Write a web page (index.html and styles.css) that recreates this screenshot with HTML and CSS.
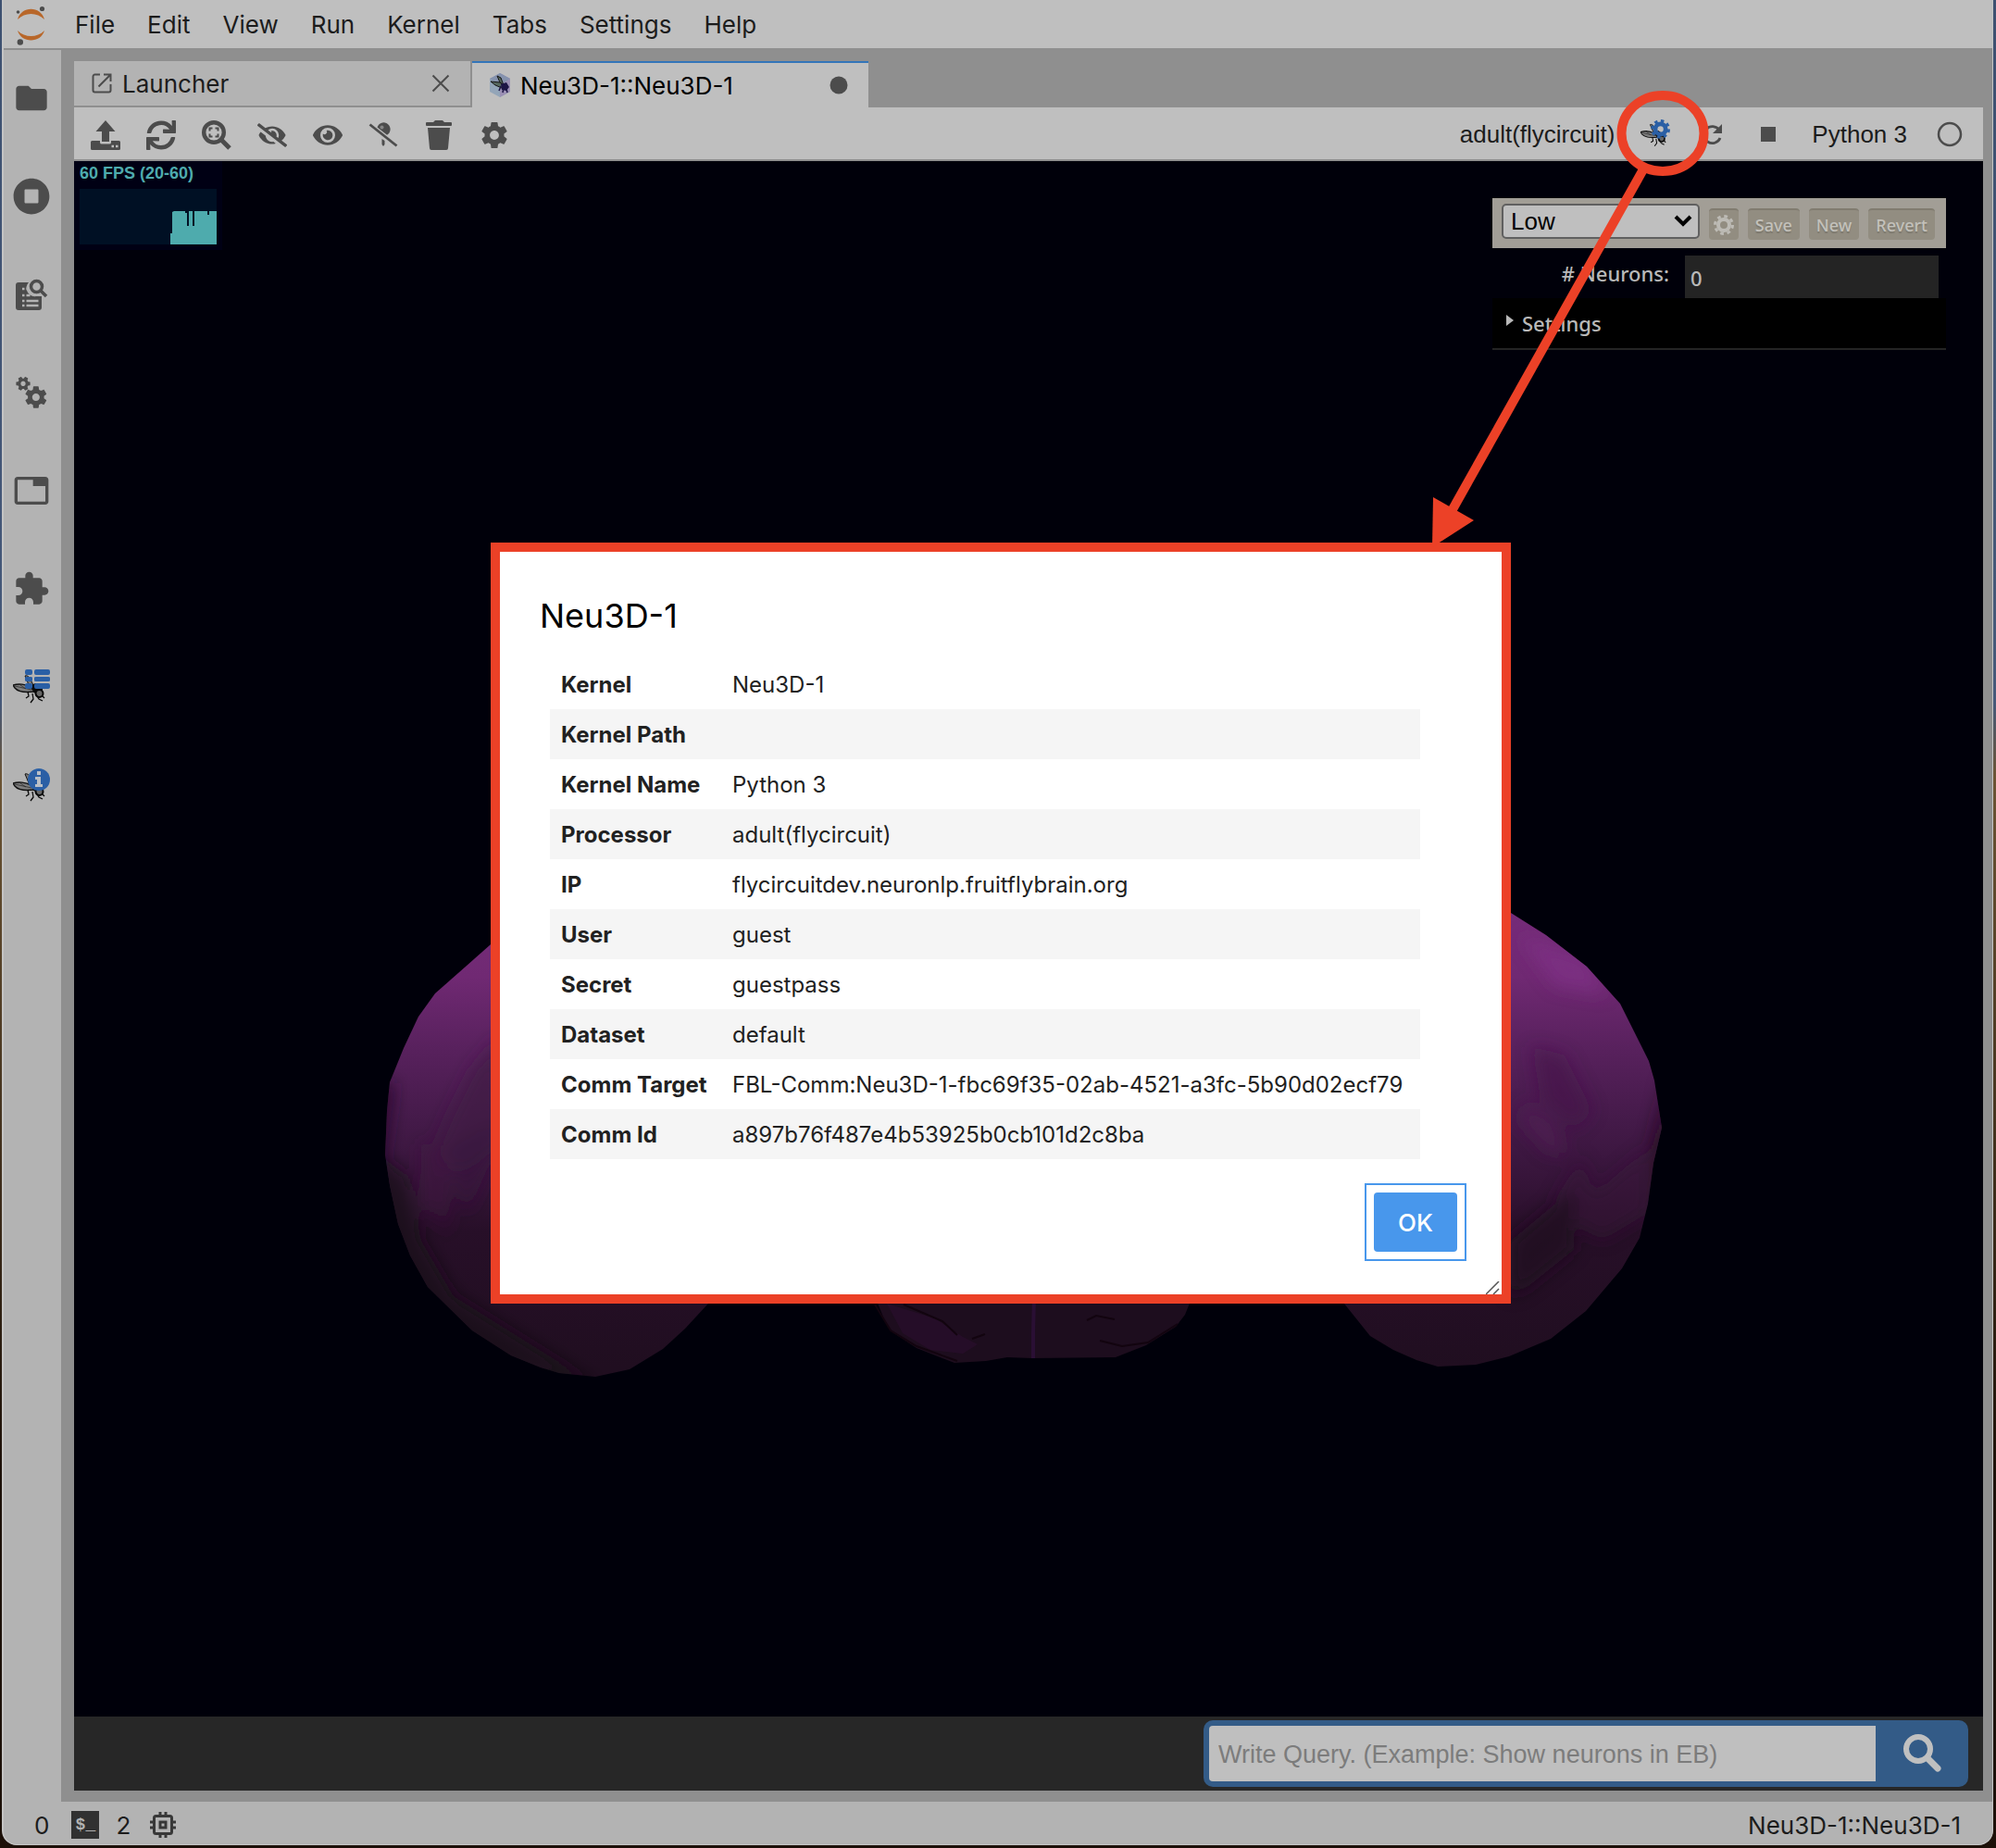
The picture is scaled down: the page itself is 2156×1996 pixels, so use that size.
FILE: index.html
```html
<!DOCTYPE html>
<html lang="en">
<head>
<meta charset="utf-8">
<meta name="viewport" content="width=device-width, initial-scale=1">
<title>Neu3D-1::Neu3D-1 - JupyterLab</title>
<link rel="stylesheet" href="styles.css">
</head>
<body>
<svg class="defs" aria-hidden="true">
  <defs>
    <path id="gear" d="M14.9 17.45C16.25 17.45 17.35 16.35 17.35 15C17.35 13.65 16.25 12.55 14.9 12.55C13.54 12.55 12.45 13.65 12.45 15C12.45 16.35 13.54 17.45 14.9 17.45ZM20.1 15.68L21.58 16.84C21.71 16.95 21.75 17.13 21.66 17.29L20.26 19.71C20.17 19.86 20 19.92 19.83 19.86L18.09 19.16C17.73 19.44 17.33 19.67 16.91 19.85L16.64 21.7C16.62 21.87 16.47 22 16.3 22H13.5C13.32 22 13.18 21.87 13.15 21.7L12.89 19.85C12.46 19.67 12.07 19.44 11.71 19.16L9.96 19.86C9.81 19.92 9.62 19.86 9.54 19.71L8.14 17.29C8.05 17.13 8.09 16.95 8.22 16.84L9.7 15.68L9.65 15L9.7 14.31L8.22 13.16C8.09 13.05 8.05 12.86 8.14 12.71L9.54 10.29C9.62 10.13 9.81 10.07 9.96 10.13L11.71 10.84C12.07 10.56 12.46 10.32 12.89 10.15L13.15 8.29C13.18 8.13 13.32 8 13.5 8H16.3C16.47 8 16.62 8.13 16.64 8.29L16.91 10.15C17.33 10.32 17.73 10.56 18.09 10.84L19.83 10.13C20 10.07 20.17 10.13 20.26 10.29L21.66 12.71C21.75 12.86 21.71 13.05 21.58 13.16L20.1 14.31L20.15 15L20.1 15.68Z"/>
    <g id="fly">
      <path d="M13 7c2-1 5 1 6 4l5 10-6-2z" fill="#777" stroke="#111" stroke-width="1"/>
      <path d="M14 20l10-5 8 6 0 5-6 1-7-4z" fill="#0a0a0a"/>
      <path d="M0 17c6-2 14-1 19 2l4 5c-9 1-17 1-21-4z" fill="#7d7d7d" stroke="#111" stroke-width="1.4"/>
      <path d="M2 18l18 4M8 17l6 4" stroke="#222" stroke-width=".7" fill="none"/>
      <circle cx="28.500" cy="26" r="4" fill="#666" stroke="#0a0a0a" stroke-width="2"/>
      <path d="M16 24l1 5-3 2M21 26l1 6-3 4M25 27l3 5 4 2M32 29l2 2" stroke="#0a0a0a" stroke-width="1.3" fill="none"/>
    </g>
  </defs>
</svg>

<div class="window">
  <header class="menubar">
    <svg class="logo" width="34" height="46" viewBox="0 0 34 46" role="img" aria-label="Jupyter">
      <path d="M3 18C7 3 28 3 32 18C24 10 11 10 3 18Z" fill="#b8672a"/>
      <path d="M3 30C7 44 28 44 32 30C24 38 11 38 3 30Z" fill="#b8672a"/>
      <circle cx="3.500" cy="10" r="1.800" fill="#4c4c4c"/><circle cx="29.500" cy="6.500" r="2.600" fill="#4c4c4c"/><circle cx="5.800" cy="42.500" r="3.200" fill="#4c4c4c"/>
    </svg>
    <nav class="menus" aria-label="Main menu">
      <button>File</button><button>Edit</button><button>View</button><button>Run</button><button>Kernel</button><button>Tabs</button><button>Settings</button><button>Help</button>
    </nav>
  </header>

  <div class="main">
    <aside class="sidebar" aria-label="Panels">
      <button aria-label="File browser"><svg viewBox="0 0 24 24"><path d="M10 4H4c-1.100 0-1.990.9-1.990 2L2 18c0 1.100.9 2 2 2h16c1.100 0 2-.9 2-2V8c0-1.100-.9-2-2-2h-8l-2-2z"/></svg></button>
      <button aria-label="Running sessions"><svg viewBox="0 0 512 512"><path d="M256 8C119 8 8 119 8 256s111 248 248 248 248-111 248-248S393 8 256 8zm96 328c0 8.800-7.200 16-16 16H176c-8.800 0-16-7.200-16-16V176c0-8.800 7.200-16 16-16h160c8.800 0 16 7.200 16 16v160z"/></svg></button>
      <button aria-label="Inspector"><svg viewBox="0 0 40 40">
        <path d="M6 7h11a9 9 0 0 0 8 15h6v12a3 3 0 0 1-3 3H6a3 3 0 0 1-3-3V10a3 3 0 0 1 3-3z"/>
        <path d="M10 14h2.500M14.500 14h2M10 21h2.500M10 27h2.500M14.500 27h13M10 32h2.500M14.500 32h13M14.500 21h4" stroke="#b3b3b3" stroke-width="2.500"/>
        <circle cx="25.500" cy="11.500" r="6" fill="none" stroke="#4c4c4c" stroke-width="3.500"/><path d="M30 16l6 6" stroke="#4c4c4c" stroke-width="3.500"/>
      </svg></button>
      <button aria-label="Property settings"><svg viewBox="0 0 24 24"><use href="#gear"/><use href="#gear" transform="translate(6.600 6.200) rotate(30) scale(.65) translate(-14.900 -15)"/></svg></button>
      <button aria-label="Open tabs"><svg viewBox="0 0 24 24"><path d="M21 3H3c-1.100 0-2 .9-2 2v14c0 1.100.9 2 2 2h18c1.100 0 2-.9 2-2V5c0-1.100-.9-2-2-2zm0 16H3V5h10v4h8v10z"/></svg></button>
      <button aria-label="Extensions"><svg viewBox="0 0 24 24"><path d="M20.500 11H19V7c0-1.100-.9-2-2-2h-4V3.500C13 2.120 11.880 1 10.500 1S8 2.120 8 3.500V5H4c-1.100 0-1.990.9-1.990 2v3.800H3.500c1.490 0 2.700 1.210 2.700 2.700s-1.210 2.700-2.700 2.700H2V20c0 1.100.9 2 2 2h3.800v-1.500c0-1.490 1.210-2.700 2.700-2.700 1.490 0 2.700 1.210 2.700 2.700V22H17c1.100 0 2-.9 2-2v-4h1.500c1.380 0 2.500-1.120 2.500-2.500S21.880 11 20.500 11z"/></svg></button>
      <button aria-label="Fly Brain Lab sessions"><svg viewBox="0 0 40 40"><use href="#fly" y="1"/><path fill="#2a5fa5" d="M15 1h4q2 0 2 2v2q0 2-2 2h-4q-2 0-2-2V3q0-2 2-2zM25 1h13q2 0 2 2v2q0 2-2 2H25q-2 0-2-2V3q0-2 2-2zM15 9h4q2 0 2 1v3q0 1-2 1h-4q-2 0-2-1v-3q0-1 2-1zM25 9h13q2 0 2 1v3q0 1-2 1H25q-2 0-2-1v-3q0-1 2-1zM15 16h4q2 0 2 2v2q0 2-2 2h-4q-2 0-2-2v-2q0-2 2-2zM25 16h13q2 0 2 2v2q0 2-2 2H25q-2 0-2-2v-2q0-2 2-2z"/></svg></button>
      <button aria-label="Fly Brain Lab info"><svg viewBox="0 0 40 40"><use href="#fly" y="1"/><circle cx="28" cy="14" r="12" fill="#2a5fa5"/><path d="M26 5h4v4h-4zM24 11h6v8h2v3h-8v-3h2v-5h-2z" fill="#b9bfc6"/></svg></button>
    </aside>

    <main class="dock">
      <div class="tabs" role="tablist">
        <div class="tab" role="tab">
          <svg width="24" height="24" viewBox="0 0 24 24" fill="none" stroke="#4c4c4c" stroke-width="2"><path d="M10 2.500H4.500a2 2 0 0 0-2 2v15a2 2 0 0 0 2 2h15a2 2 0 0 0 2-2V13M14 2.500h7.500V10M21 3L8.500 15.500"/></svg>
          <span class="tab-name">Launcher</span>
          <button class="tab-close" aria-label="Close"><svg width="20" height="20" viewBox="0 0 20 20"><path d="M1.500 1.500l17 17M18.500 1.500l-17 17" stroke="#4c4c4c" stroke-width="2"/></svg></button>
        </div>
        <div class="tab active" role="tab" aria-selected="true">
          <svg width="24" height="26" viewBox="0 0 24 26"><path d="M12 0l11 6v14l-11 6L1 20V6z" fill="#93a5b8"/><path d="M12 0l11 6v14l-11 6V12z" fill="#9b90b4"/><path d="M12 0l11 6-11 7L1 6z" fill="#8592ad"/><path d="M2 9l10 1 6 5-4 1-7-3zM9 3l4 2 3 8-4-3z" fill="#56685f" stroke="#161616" stroke-width="1"/><path d="M13 12l6-2 3 5-3 4-5-1z" fill="#1d1646"/><path d="M13 14l-2 5M16 16l-1 5M19 17l1 4" stroke="#1d1646" stroke-width="1.500"/></svg>
          <span class="tab-name">Neu3D-1::Neu3D-1</span>
          <button class="tab-close" aria-label="Unsaved changes"><svg width="20" height="20" viewBox="0 0 20 20"><circle cx="10" cy="10" r="9.500" fill="#4c4c4c"/></svg></button>
        </div>
      </div>

      <div class="toolbar">
        <div class="tools">
          <button aria-label="Upload"><svg viewBox="0 0 32 32"><path d="M16 0l10.500 12H20v11h-8V12H5.500z"/><path d="M1.500 22H10v2q0 1.500 2 1.500h8q2 0 2-1.500v-2h8.500Q32 22 32 23.500v7q0 1.500-1.500 1.500h-29Q0 32 0 30.500v-7Q0 22 1.500 22z"/><path d="M22.500 28h2.500M27 28h2.500" stroke="#bfbfbf" stroke-width="2.500"/></svg></button>
          <button aria-label="Reset"><svg viewBox="0 0 512 512"><path d="M440.650 12.570l4 82.770A247.160 247.160 0 0 0 255.830 8C134.730 8 33.910 94.920 12.290 209.820A12 12 0 0 0 24.090 224h49.050a12 12 0 0 0 11.670-9.260 175.910 175.910 0 0 1 317-56.940l-101.460-4.860a12 12 0 0 0-12.570 12v47.410a12 12 0 0 0 12 12H500a12 12 0 0 0 12-12V12a12 12 0 0 0-12-12h-47.370a12 12 0 0 0-11.980 12.570zM255.830 432a175.610 175.610 0 0 1-146-77.800l101.800 4.870a12 12 0 0 0 12.570-12v-47.400a12 12 0 0 0-12-12H12a12 12 0 0 0-12 12V500a12 12 0 0 0 12 12h47.350a12 12 0 0 0 12-12.600l-4.150-82.570A247.170 247.170 0 0 0 255.830 504c121.110 0 221.930-86.920 243.550-201.820a12 12 0 0 0-11.800-14.180h-49.050a12 12 0 0 0-11.670 9.260A175.860 175.860 0 0 1 255.830 432z"/></svg></button>
          <button aria-label="Zoom to fit"><svg viewBox="0 0 32 32"><circle cx="13" cy="13" r="10.800" fill="none" stroke="#4c4c4c" stroke-width="4.400"/><path d="M21 21l9 9" stroke="#4c4c4c" stroke-width="5"/><path d="M8.500 11.500v-3h3M14.500 8.500h3v3M17.500 14.500v3h-3M11.500 17.500h-3v-3" fill="none" stroke="#4c4c4c" stroke-width="2"/></svg></button>
          <button aria-label="Hide all"><svg viewBox="0 0 640 512"><path d="M320 400c-75.850 0-137.250-58.710-142.900-133.110L72.200 185.820c-13.790 17.300-26.480 35.590-36.720 55.590a32.350 32.350 0 0 0 0 29.190C89.710 376.410 197.070 448 320 448c26.910 0 52.870-4 77.890-10.460L346 397.390a144.130 144.130 0 0 1-26 2.610zm313.820 58.100l-110.550-85.440a331.250 331.250 0 0 0 81.250-102.070 32.350 32.350 0 0 0 0-29.190C550.290 135.590 442.930 64 320 64a308.150 308.150 0 0 0-147.320 37.700L45.460 3.370A16 16 0 0 0 23 6.180L3.370 31.450A16 16 0 0 0 6.180 53.900l588.360 454.730a16 16 0 0 0 22.460-2.810l19.640-25.270a16 16 0 0 0-2.820-22.450zm-183.720-142l-39.300-30.380A94.750 94.750 0 0 0 416 256a94.760 94.760 0 0 0-121.310-92.210A47.650 47.650 0 0 1 304 192a46.640 46.640 0 0 1-1.540 10l-73.610-56.890A142.310 142.310 0 0 1 320 112a143.920 143.920 0 0 1 144 144c0 21.630-5.290 41.790-13.900 60.110z"/></svg></button>
          <button aria-label="Show all"><svg viewBox="0 0 576 512"><path d="M572.520 241.400C518.290 135.590 410.930 64 288 64S57.680 135.640 3.480 241.410a32.350 32.350 0 0 0 0 29.190C57.710 376.410 165.070 448 288 448s230.320-71.640 284.520-177.410a32.350 32.350 0 0 0 0-29.190zM288 400a144 144 0 1 1 144-144 143.930 143.930 0 0 1-144 144zm0-240a95.310 95.310 0 0 0-25.310 3.790 47.850 47.850 0 0 1-66.900 66.900A95.780 95.780 0 1 0 288 160z"/></svg></button>
          <button aria-label="Unpin all"><svg viewBox="0 0 32 32"><path d="M1.500 4.500l29 23" stroke="#4c4c4c" stroke-width="2.800"/><path d="M9.500 7.500a7.200 7.200 0 1 1 10.500 8.300z"/><circle cx="14.500" cy="7.500" r="2" fill="#858585"/><path d="M14.500 20l3 2v4l-1.500 2-1.500-2z"/></svg></button>
          <button aria-label="Remove all"><svg viewBox="0 0 32 32"><path d="M3 2h7l2-2h8l2 2h7q1 0 1 1v2q0 1-1 1H3Q2 6 2 5V3q0-1 1-1zM4 8h24l-2 22q0 2-2 2H8q-2 0-2-2z"/></svg></button>
          <button aria-label="Settings"><svg viewBox="6.900 7 16 16"><use href="#gear"/></svg></button>
        </div>
        <div class="kernel">
          <button class="processor">adult(flycircuit)</button>
          <button class="fly-config" aria-label="Processor settings"><svg width="32" height="32" viewBox="0 0 40 40"><use href="#fly"/><circle cx="27" cy="13" r="7" fill="none" stroke="#2a5fa5" stroke-width="6"/><circle cx="27" cy="13" r="11" fill="none" stroke="#2a5fa5" stroke-width="4" stroke-dasharray="4.320 4.320"/></svg></button>
          <button class="restart" aria-label="Restart kernel"><svg width="24" height="24" viewBox="0 0 24 24"><path d="M19 7.500A9 9 0 1 0 20 16" fill="none" stroke="#4c4c4c" stroke-width="2.800"/><path d="M22 1v10H12z"/></svg></button>
          <button class="stop" aria-label="Interrupt kernel"><svg width="16" height="16" viewBox="0 0 16 16"><path d="M0 0h16v16H0z"/></svg></button>
          <button class="kernel-name">Python 3</button>
          <svg width="28" height="28" viewBox="0 0 28 28"><circle cx="14" cy="14" r="12" fill="none" stroke="#4c4c4c" stroke-width="2.500"/></svg>
        </div>
      </div>

      <section class="canvas" aria-label="3D view">
        <svg class="brain" viewBox="80 174 2062 1680" preserveAspectRatio="xMidYMid meet" aria-hidden="true">
          <defs>
            <linearGradient id="lobe" gradientUnits="userSpaceOnUse" x1="0" y1="986" x2="0" y2="1476">
              <stop offset="0" stop-color="#752c79"/><stop offset=".14" stop-color="#702973"/><stop offset=".3" stop-color="#58215d"/><stop offset=".46" stop-color="#441a49"/><stop offset=".6" stop-color="#351438"/><stop offset=".7" stop-color="#270f28"/><stop offset="1" stop-color="#200e20"/>
            </linearGradient>
            <filter id="soft" x="-20%" y="-20%" width="140%" height="140%"><feGaussianBlur stdDeviation="9"/></filter>
            <clipPath id="left"><path d="M545 1010L530 1020L470 1073L452 1098L436 1132L421 1169L418 1200L416 1247L421 1280L430 1322L443 1356L462 1390L510 1437L552 1464L584 1477L604 1483L643 1487L680 1479L716 1457L740 1435L765 1408V1010Z"/></clipPath>
            <clipPath id="right"><path d="M1600 966L1632 986L1670 1010L1714 1044L1750 1084L1781 1146L1787 1167L1795 1218L1786 1256L1780 1300L1771 1337L1752 1370L1713 1416L1675 1446L1630 1465L1594 1474L1553 1476L1530 1469L1505 1458L1480 1443L1452 1408L1440 1380V966Z"/></clipPath>
          </defs>
          <g clip-path="url(#left)">
            <path d="M400 960H780V1500H400Z" fill="url(#lobe)"/>
            <g filter="url(#soft)">
              <path d="M540 1120L510 1155L485 1205L470 1240L490 1270L550 1240Z" fill="#3f1745" opacity=".7"/>
              <path d="M490 1238L495 1290L505 1310L525 1265L540 1210Z" fill="#38173a" opacity=".6"/>
              <path d="M455 1235L456 1320L466 1300L484 1335L486 1240Z" fill="#42193f" opacity=".5"/>
              <path d="M400 1240L440 1270L455 1340L490 1400L650 1500L480 1460L400 1320Z" fill="#1d0e1c" opacity=".8"/>
              <path d="M419 1170L408 1250" stroke="#220f26" stroke-width="12"/>
            </g>
          </g>
          <g clip-path="url(#right)">
            <path d="M1420 940H1820V1500H1420Z" fill="url(#lobe)"/>
            <g filter="url(#soft)">
              <path d="M1640 1010L1714 1034L1735 1075L1680 1065Z" fill="#82308a" opacity=".6"/>
              <path d="M1655 1130L1690 1140L1720 1200L1700 1220L1665 1190Z" fill="#43194a" opacity=".6"/>
              <path d="M1650 1190L1680 1215L1692 1245L1672 1245L1640 1210Z" fill="#542056" opacity=".6"/>
              <path d="M1680 1295L1708 1250L1722 1290L1745 1270L1780 1240V1310L1730 1340L1700 1320Z" fill="#35123a" opacity=".5"/>
              <path d="M1802 1160V1260L1788 1320L1784 1240Z" fill="#261022"/>
              <path d="M1680 1300L1700 1290L1700 1350L1650 1390L1632 1400V1340Z" fill="#1e0d1e" opacity=".8"/>
            </g>
          </g>
          <path d="M945 1400L955 1425L964 1439L990 1456L1031 1472L1065 1470L1088 1466L1115 1467L1205 1466L1238 1453L1270 1433L1280 1420L1288 1400Z" fill="#1d0d1e"/>
          <path d="M958 1408L1010 1424L1040 1444L1056 1452L1040 1462L1005 1458L975 1440Z" fill="#280e2b" opacity=".8"/>
          <path d="M1117 1400L1116 1440V1467" stroke="#2a0f34" stroke-width="4"/>
          <path d="M976 1409L1018 1427L1034 1442M1050 1446L1064 1441M1174 1426L1184 1421L1204 1425M1188 1448L1212 1454L1240 1450L1272 1430M945 1409L962 1437L990 1454L1034 1470" fill="none" stroke="#12040f" stroke-width="2"/>
        </svg>

        <div class="fps">
          <span>60 FPS (20-60)</span>
          <svg width="148" height="60" viewBox="0 0 148 60"><path d="M0 0h148v60H0z" fill="#001024"/><path d="M98 60V48h2V25l2-1h12v2h2v14h2V24h4v16h2V24h14v4h2v-4h8v36z" fill="#4eabad"/></svg>
        </div>

        <form class="gui">
          <div class="gui-save">
            <select aria-label="Preset"><option>Low</option></select>
            <button type="button" aria-label="Preset options"><svg width="22" height="22" viewBox="0 0 22 22"><circle cx="11" cy="11" r="6" fill="none" stroke="#bdbbb5" stroke-width="4"/><circle cx="11" cy="11" r="9.500" fill="none" stroke="#bdbbb5" stroke-width="3" stroke-dasharray="3.730 3.730"/></svg></button>
            <button type="button">Save</button>
            <button type="button">New</button>
            <button type="button">Revert</button>
          </div>
          <div class="gui-row">
            <label for="neurons"># Neurons:</label>
            <input id="neurons" type="text" value="0">
          </div>
          <button type="button" class="gui-folder"><svg width="8" height="12" viewBox="0 0 8 12"><path d="M0 0l8 6-8 6z"/></svg>Settings</button>
        </form>
      </section>

      <footer class="querybar">
        <form class="query">
          <input type="text" aria-label="Query" placeholder="Write Query. (Example: Show neurons in EB)">
          <button type="button" aria-label="Search"><svg width="42" height="42" viewBox="0 0 42 42"><circle cx="17" cy="17" r="13" fill="none" stroke="#c0c0c0" stroke-width="6"/><path d="M27 27l11 11" stroke="#c0c0c0" stroke-width="7" stroke-linecap="round"/></svg></button>
        </form>
      </footer>
    </main>
  </div>

  <footer class="statusbar">
    <span>0</span>
    <span class="terminal">$_</span>
    <span>2</span>
    <svg width="28" height="28" viewBox="0 0 28 28" fill="none" stroke="#383838"><rect x="4.500" y="4.500" width="19" height="19" rx="2" stroke-width="3"/><rect x="11" y="11" width="6" height="6" stroke-width="3"/><path d="M11 0v4M17 0v4M11 24v4M17 24v4M0 11h4M0 17h4M24 11h4M24 17h4" stroke-width="3"/></svg>
    <span class="current">Neu3D-1::Neu3D-1</span>
  </footer>
</div>

<div class="overlay">
  <section class="dialog" role="dialog" aria-modal="true" aria-labelledby="dialog-title">
    <h1 id="dialog-title">Neu3D-1</h1>
    <table>
      <tbody>
        <tr><th scope="row">Kernel</th><td>Neu3D-1</td></tr>
        <tr><th scope="row">Kernel Path</th><td></td></tr>
        <tr><th scope="row">Kernel Name</th><td>Python 3</td></tr>
        <tr><th scope="row">Processor</th><td>adult(flycircuit)</td></tr>
        <tr><th scope="row">IP</th><td>flycircuitdev.neuronlp.fruitflybrain.org</td></tr>
        <tr><th scope="row">User</th><td>guest</td></tr>
        <tr><th scope="row">Secret</th><td>guestpass</td></tr>
        <tr><th scope="row">Dataset</th><td>default</td></tr>
        <tr><th scope="row">Comm Target</th><td>FBL-Comm:Neu3D-1-fbc69f35-02ab-4521-a3fc-5b90d02ecf79</td></tr>
        <tr><th scope="row">Comm Id</th><td>a897b76f487e4b53925b0cb101d2c8ba</td></tr>
      </tbody>
    </table>
    <button class="ok">OK</button>
    <svg class="grip" width="16" height="14" viewBox="0 0 16 14" aria-hidden="true"><path d="M0 14L14 0M8 14L14 8" stroke="#555" stroke-width="1.500"/></svg>
  </section>
</div>

<svg class="callout" width="320" height="500" viewBox="1536 94 320 500" aria-hidden="true">
  <ellipse cx="1796" cy="144" rx="44.500" ry="41" fill="none" stroke="#ec4127" stroke-width="10"/>
  <path d="M1775 183L1568 552" stroke="#ec4127" stroke-width="10"/>
  <path d="M1547 591L1548 537L1592 562Z" fill="#ec4127"/>
</svg>
</body>
</html>
```
FILE: styles.css
```css
* { box-sizing: border-box; }

body {
  margin: 0;
  height: 100vh;
  padding: 0 3px 3px 2px;
  background: linear-gradient(#3d5070 0, #46597a 38%, #6b5434 42%, #1c1008 80%, #1c1008 100%);
  font-family: Inter, "Liberation Sans", sans-serif;
  font-size: 26px;
  color: #1c1c1c;
}

button, input, select { font: inherit; color: inherit; }

button {
  margin: 0;
  padding: 0;
  border: 0;
  background: none;
}

svg { display: block; flex: none; }

.defs { position: absolute; width: 0; height: 0; }

.window {
  display: flex;
  flex-direction: column;
  height: 100%;
  border: solid #c4c4c4;
  border-width: 0 1px 1px 2px;
  border-radius: 0 0 16px 16px;
  background: #b3b3b3;
  overflow: hidden;
}

/* Menu bar */

.menubar {
  display: flex;
  align-items: center;
  height: 54px;
  border-bottom: 2px solid #8f8f8f;
  background: #bfbfbf;
}

.logo { margin-left: 12px; }

.menus {
  display: flex;
  margin-left: 14px;
}

.menus button { padding: 2px 18px 0 17px; line-height: 50px; }

/* Left sidebar */

.main {
  display: flex;
  flex: 1;
  min-height: 0;
}

.sidebar {
  display: flex;
  flex-direction: column;
  width: 62px;
  padding-right: 2px;
}

.sidebar button {
  display: flex;
  justify-content: center;
  align-items: center;
  height: 106px;
  padding-bottom: 2px;
}

.sidebar svg { width: 40px; height: 40px; fill: #4c4c4c; }

/* Dock */

.dock {
  display: flex;
  flex-direction: column;
  flex: 1;
  min-width: 0;
  padding: 12px 10px 12px 14px;
  background: #8f8f8f;
}

.tabs { display: flex; }

.tab {
  display: flex;
  align-items: center;
  gap: 10px;
  width: 430px;
  height: 50px;
  padding: 0 22px 0 18px;
  border-right: 2px solid #8f8f8f;
  border-bottom: 2px solid #8f8f8f;
  background: #b3b3b3;
}

.tab.active {
  width: 428px;
  border-top: 2px solid #3375b9;
  border-right: 0;
  border-bottom: 0;
  background: #bfbfbf;
  color: #000;
}

.tab-name { flex: 1; }

.toolbar {
  display: flex;
  justify-content: space-between;
  align-items: center;
  height: 58px;
  padding: 0 22px 0 18px;
  border-bottom: 2px solid #8f8f8f;
  background: #bfbfbf;
}

.tools { display: flex; gap: 28px; padding-top: 4px; }
.toolbar svg { fill: #4c4c4c; }
.tools svg { width: 32px; height: 32px; }

.kernel {
  display: flex;
  align-items: center;
  padding-top: 2px;
  font-family: "Liberation Sans", Arial, sans-serif;
  font-size: 26px;
}

.fly-config { margin-left: 28px; }
.restart { margin-left: 34px; }
.stop { margin-left: 40px; }
.kernel-name { margin: 0 32px 0 39px; }

/* 3D canvas */

.canvas {
  position: relative;
  flex: 1;
  min-height: 0;
  background: #00000a;
}

.brain { position: absolute; width: 100%; height: 100%; }

.fps {
  position: absolute;
  top: 0;
  left: 0;
  width: 160px;
  height: 96px;
  padding: 0 6px;
  background: #000014;
  font: bold 18px/26px "Liberation Sans", Arial, sans-serif;
  color: #4eabad;
}

.fps svg { margin-top: 4px; }

.gui {
  position: absolute;
  top: 40px;
  right: 40px;
  width: 490px;
  font: 500 22px/28px "Noto Sans", sans-serif;
  color: #b9b9b9;
}

.gui-save {
  display: flex;
  align-items: center;
  gap: 10px;
  height: 54px;
  padding: 0 12px 0 10px;
  background: #a29e96;
}

.gui-save select {
  width: 216px;
  height: 38px;
  margin-bottom: 4px;
  padding: 0 28px 0 8px;
  border: 2px solid #606060;
  border-radius: 5px;
  appearance: none;
  background: #bfbfbf url("data:image/svg+xml,%3Csvg xmlns='http://www.w3.org/2000/svg' width='20' height='14'%3E%3Cpath d='M2 2l8 8 8-8' fill='none' stroke='%23000' stroke-width='4'/%3E%3C/svg%3E") no-repeat right 6px center;
  font: 26px/32px "Liberation Sans", Arial, sans-serif;
  color: #000;
}

.gui-save button {
  height: 34px;
  padding: 0 8px;
  margin-top: 2px;
  border-top: 2px solid #817c70;
  border-radius: 4px;
  background: #928d81;
  font-size: 18px;
  line-height: 30px;
  color: #c3c1bb;
  text-shadow: 0 2px 1px #7c786d;
}

.gui-save button svg { margin: 0 -3px; }

.gui-row {
  display: flex;
  padding: 8px 8px 0 0;
}

.gui-row label {
  flex: 1;
  padding: 5px 17px 0 0;
  text-align: right;
}

.gui-row input {
  width: 274px;
  height: 46px;
  padding: 2px 6px 0;
  border: 0;
  background: #242424;
}

.gui-folder {
  display: flex;
  align-items: center;
  gap: 9px;
  width: 100%;
  height: 56px;
  padding-left: 15px;
  border-bottom: 2px solid #242424;
  background: #000;
}

.gui-folder svg { margin-bottom: 6px; fill: #b9b9b9; }

/* Query bar */

.querybar {
  display: flex;
  justify-content: flex-end;
  padding: 4px 16px;
  background: #272727;
}

.query {
  display: flex;
  width: 826px;
  height: 72px;
  padding: 6px;
  border-radius: 10px;
  background: #335b87;
}

.query input {
  width: 720px;
  padding: 2px 10px 0;
  border: 0;
  border-radius: 4px 0 0 4px;
  background: #bfbfbf;
  font: 27px "Liberation Sans", Arial, sans-serif;
}

.query input::placeholder { color: #7c7c7c; opacity: 1; }

.query button {
  display: flex;
  justify-content: center;
  align-items: center;
  flex: 1;
  padding: 0 0 2px 6px;
}

/* Status bar */

.statusbar {
  display: flex;
  align-items: center;
  height: 46px;
  padding: 4px 34px 0 33px;
}

.terminal {
  width: 30px;
  margin: 0 18px 0 24px;
  background: #313131;
  font: bold 18px/30px "Liberation Mono", monospace;
  color: #b3b3b3;
  text-align: center;
}

.statusbar svg { margin-left: 21px; }
.current { margin-left: auto; }

/* Dialog */

.overlay {
  position: fixed;
  inset: 0;
  display: flex;
  justify-content: center;
  align-items: center;
  padding: 0 0 2px 6px;
}

.dialog {
  position: relative;
  display: flex;
  flex-direction: column;
  width: 1102px;
  padding: 45px 48px 46px 43px;
  border: 10px solid #ec4127;
  background: #fff;
}

.dialog h1 {
  margin: 0 0 23px;
  font-size: 36px;
  font-weight: 400;
  line-height: 48px;
  color: #000;
}

.dialog table {
  width: 940px;
  margin-left: 11px;
  border-collapse: collapse;
  table-layout: fixed;
  font-size: 24px;
  line-height: 30px;
  color: #212121;
}

.dialog th, .dialog td {
  height: 54px;
  padding: 2px 10px 0 12px;
  text-align: left;
}

.dialog th { width: 185px; padding-right: 0; white-space: nowrap; }
.dialog tr:nth-child(even) { background: #f5f5f5; }

.ok {
  position: relative;
  align-self: flex-end;
  width: 90px;
  height: 64px;
  margin-top: 36px;
  border-radius: 4px;
  background: #4897ec;
  font-size: 26px;
  font-weight: 500;
  color: #fff;
}

/* Square focus ring around the rounded button */
.ok::after {
  content: "";
  position: absolute;
  inset: -10px;
  border: 2px solid #4897ec;
}

.grip { position: absolute; right: 1px; bottom: 0; }

/* Highlight from the processor button to its dialog */

.callout { position: absolute; top: 94px; right: 300px; pointer-events: none; }
```
